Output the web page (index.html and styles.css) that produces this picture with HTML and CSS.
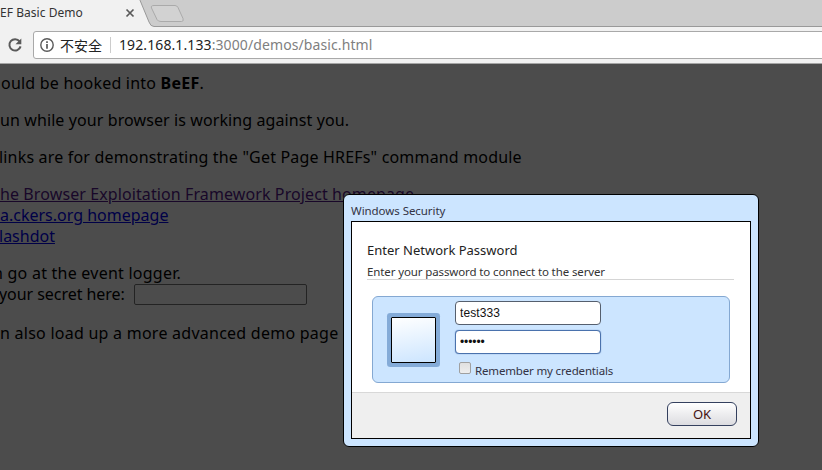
FILE: index.html
```
<!doctype html>
<html>
<head>
	<meta charset="utf-8">
	<title>BeEF Basic Demo</title>
	<link rel="stylesheet" href="styles.css">
</head>
<body>
	<div id="tabs">
		<span class="title">EF Basic Demo</span>
		<svg width="822" height="27" viewBox="0 0 822 27">
			<path d="M139.5 -1 L149 22 Q150.500 26.500 154 26.500 H823 V-1 Z" fill="#cccccc" stroke="#999"/>
			<path d="M154 5.500 H175 Q177 5.500 178 7.500 L183 18.500 Q184 21.500 181.500 21.500 H161 Q158 21.500 157 19.500 L151.500 8 Q150.500 5.500 154 5.500 Z" fill="#d2d2d2" stroke="#aaa"/>
			<path d="M126.500 9.500 L133.500 16.500 M133.500 9.500 L126.500 16.500" stroke="#5a5a5a" stroke-width="1.700"/>
		</svg>
	</div>
	<div id="toolbar">
		<svg class="reload" width="16" height="16" viewBox="0 0 16 16">
			<path d="M12.600 4.300 A5.700 5.700 0 1 0 13.600 9.400" fill="none" stroke="#5a5a5a" stroke-width="2"/>
			<path d="M14.300 1.500 V7.300 H8.500 Z" fill="#5a5a5a"/>
		</svg>
		<div id="address">
			<svg width="14" height="14" viewBox="0 0 14 14">
				<circle cx="7" cy="7" r="6.200" fill="none" stroke="#5a5a5a" stroke-width="1.400"/>
				<path d="M7 6 V10.700 M7 3.300 V4.900" stroke="#5a5a5a" stroke-width="1.700"/>
			</svg>
			<span class="warn">不安全</span>
			<span class="url"><b>192.168.1.133</b>:3000/demos/basic.html</span>
		</div>
	</div>

	<div id="page">
		<p class="l1">ould be hooked into <b>BeEF</b>.</p>
		<p class="l2">un while your browser is working against you.</p>
		<p class="l3">links are for demonstrating the "Get Page HREFs" command module</p>
		<ul>
			<li class="l4"><a class="visited" href="#">he Browser Exploitation Framework Project homepage</a></li>
			<li class="l5"><a href="#">a.ckers.org homepage</a></li>
			<li class="l6"><a href="#">lashdot</a></li>
		</ul>
		<p class="l7">n go at the event logger.</p>
		<div class="secret"><span class="l8">your secret here:</span><input type="text"></div>
		<p class="l9">n also load up a more advanced demo page</p>
		<div id="overlay"></div>
	</div>

	<div id="dialog">
		<div class="caption"><span>Windows Security</span></div>
		<div class="inner">
			<div class="main">
				<h1><span>Enter Network Password</span></h1>
				<h2><span>Enter your password to connect to the server</span></h2>
				<div class="login">
					<div class="avatar"></div>
					<div class="fields">
						<input type="text" value="test333">
						<input class="focus" type="text" value="••••••">
						<label><i></i><span>Remember my credentials</span></label>
					</div>
				</div>
			</div>
			<div class="foot"><button type="button">OK</button></div>
		</div>
	</div>
</body>
</html>
```
FILE: styles.css
```
*{margin: 0; padding: 0; box-sizing: border-box;}
body{ width: 822px; height: 470px; overflow: hidden; position: relative; font-family: "Noto Sans", "Noto Sans CJK SC", sans-serif; color: #000; background: #f1f1f1;}
svg{ display: block; flex: none;}

#tabs{ height: 27px; position: relative;}
#tabs svg{ position: absolute; left: 0; top: 0;}
#tabs .title{ display: block; font-size: 12px; line-height: 26px; letter-spacing: 0.04px; color: #333; white-space: nowrap;}

#toolbar{ height: 37px; display: flex; padding: 4px 0 0 7px; border-bottom: 1px solid #a5a5a5;}
#toolbar .reload{ margin: 6px 10px 0 0;}
#address{ flex: none; width: 800px; height: 28px; display: flex; align-items: center; padding-left: 6px; background: #fff; border: 1px solid #a9a9a9; border-radius: 3px;}
#address .warn{ margin: -1px 0 0 6px; padding-right: 8px; font: 14px/16px "Noto Sans CJK SC", sans-serif; color: #222; border-right: 1px solid #ccc;}
#address .url{ margin-left: 8px; font-size: 14px; line-height: 20px; letter-spacing: 0.1px; color: #808080;}
#address b{ font-weight: normal; color: #222;}

#page{ height: 406px; padding-top: 9px; position: relative; overflow: hidden; background: #fff; font-size: 16px; line-height: 21px; white-space: nowrap;}
#page p, #page ul{ margin-bottom: 16px; list-style: none;}
#page a{ color: #0000ee;}
#page a.visited{ color: #551a8b;}
#page .l1{ padding-left: 1px; letter-spacing: 0.22px;}
#page .l2{ letter-spacing: 0.1px;}
#page .l3{ text-indent: -1px; letter-spacing: 0.18px;}
#page .l4{ letter-spacing: 0.1px;}
#page .l6{ text-indent: -1px;}
#page .l7{ margin: 0 0 0 -7px; letter-spacing: 0.24px;}
#page .l8{ margin-left: -1px; letter-spacing: -0.05px;}
#page .l9{ letter-spacing: 0.25px;}
#page .secret{ display: flex; height: 23px; margin-bottom: 16px;}
#page input{ width: 173px; height: 21px; margin: 0 0 0 9px; border: 1px solid #777; border-radius: 2px; background: #fff;}
#overlay{ position: absolute; left: 0; top: 0; right: 0; bottom: 0; background: rgba(0,0,0,0.7);}

#dialog{ position: absolute; left: 343px; top: 194px; width: 416px; height: 253px; padding: 0 7px 7px; border: 1px solid #000; border-radius: 6px; background: #cce5ff;}
#dialog .caption{ height: 26px; font-size: 11.5px; line-height: 31px; letter-spacing: -0.06px; color: #334;}
#dialog .inner{ height: 218px; display: flex; flex-direction: column; border: 1px solid #000; background: #fff;}
#dialog .main{ flex: 1; padding: 17px 16px 0 15px;}
#dialog h1{ font-size: 13px; line-height: 22px; font-weight: normal; color: #222;}
#dialog h2{ height: 19px; font-size: 11.5px; line-height: 22px; letter-spacing: -0.12px; font-weight: normal; color: #333; border-bottom: 1px solid #d5d5d5;}
#dialog .login{ display: flex; width: 358px; height: 87px; margin: 16px 0 0 5px; padding: 4px 0 0 14px; border: 1px solid #84a8d2; border-radius: 6px; background: #cce5ff;}
#dialog .avatar{ width: 45px; height: 46px; margin: 16px 19px 0 4px; border: 1px solid #000; box-shadow: 0 0 0 4px #84abd8; border-radius: 1px; background: linear-gradient(170deg, #fff, #cce5ff);}
#dialog .fields{ display: flex; flex-direction: column;}
#dialog .fields input{ width: 146px; height: 24px; margin-bottom: 5px; padding-left: 4px; font: 12px "Liberation Sans", sans-serif; letter-spacing: 0.1px; color: #111; background: #fff; border: 1px solid #555f6e; border-radius: 4px; outline: none;}
#dialog .fields .focus{ letter-spacing: -0.1px; border-color: #4a72ad; box-shadow: 0 0 1px #4a72ad;}
#dialog label{ display: flex; margin: 3px 0 0 4px; font-size: 11.5px; line-height: 18px; letter-spacing: -0.16px; color: #334;}
#dialog label i{ width: 12px; height: 12px; margin: 0 4px 0 0; border: 1px solid #a0a0a0; border-radius: 2px; background: linear-gradient(#e0e0e0, #eee);}
#dialog .foot{ height: 46px; padding: 9px 13px 0 0; text-align: right; border-top: 1px solid #d8d8d8; background: #efefef;}
#dialog button{ width: 70px; height: 24px; padding-bottom: 1px; font: 13px/20px "Noto Sans", sans-serif; color: #411; border: 1px solid #34405e; border-radius: 6px; background: linear-gradient(#fff, #dcdce0); vertical-align: top;}
```
